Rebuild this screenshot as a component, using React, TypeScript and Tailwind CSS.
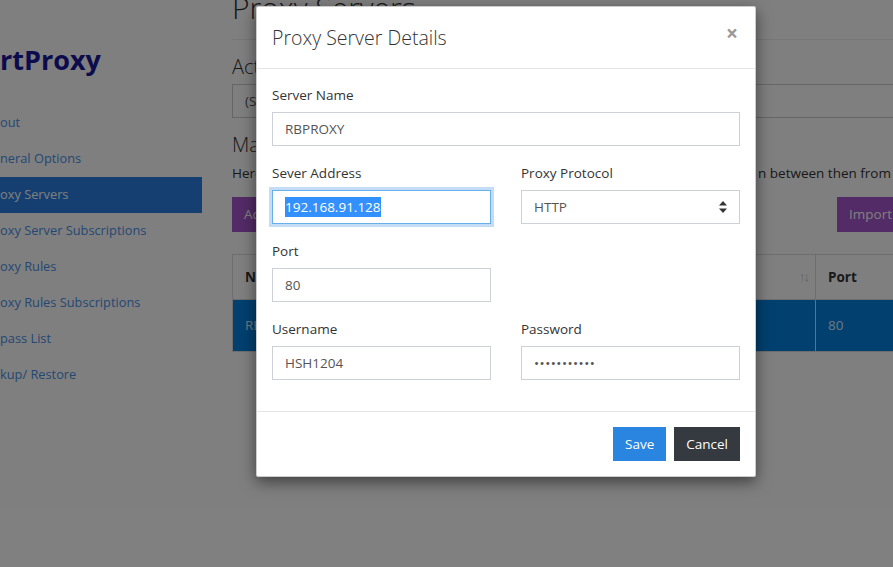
const sideLinks = [
  { label: 'out' },
  { label: 'neral Options' },
  { label: 'oxy Servers', active: true },
  { label: 'oxy Server Subscriptions' },
  { label: 'oxy Rules' },
  { label: 'oxy Rules Subscriptions' },
  { label: 'pass List' },
  { label: 'kup/ Restore' },
];

const Sidebar = () => (
  <aside className="w-[202px] shrink-0">
    <div className="mt-[40px] flex h-[40px] items-center text-[27px] font-bold text-[#16169c]">rtProxy</div>
    <nav className="mt-[25px] flex flex-col">
      {sideLinks.map((l) => (
        <a
          key={l.label}
          href="#"
          className={
            l.active
              ? 'flex h-[36px] items-center bg-[#2a7fe0] text-[12.8px] text-white'
              : 'flex h-[36px] items-center text-[12.8px] text-[#4a90e6]'
          }
        >
          {l.label}
        </a>
      ))}
    </nav>
  </aside>
);

const PageBehind = () => (
  <main className="ml-[30px] w-[753px] shrink-0 text-[#333]">
    <h1 className="-mt-[12px] border-b border-[#eee] pb-[11px] text-[30px] font-light leading-[40px]">Proxy Servers</h1>
    <h4 className="mt-[15px] text-[20px] font-light leading-[24px]">Active Proxy Server</h4>
    <div className="mt-[5px] flex h-[34px] items-center border border-[#ccc] px-[12px] text-[13.5px] text-[#555]">
      (Select a proxy server)
    </div>
    <h4 className="mt-[15px] text-[20px] font-light leading-[24px]">Manage Proxy Servers</h4>
    <p className="mt-[6px] whitespace-nowrap text-[13.5px] leading-[20px]">
      <span className="inline-block w-[526px] overflow-hidden align-bottom">Here are your proxy servers, you can make a selectio</span>
      n between then from toolbar.
    </p>
    <div className="mt-[14px] flex">
      <button className="h-[35px] bg-[#a656cc] px-[12px] text-[13.5px] text-white">Add Proxy Server</button>
      <div className="ml-auto flex gap-[4px]">
        <button className="h-[35px] w-[72px] bg-[#a656cc] pl-[12px] text-left text-[13.5px] text-white">Import</button>
        <button className="h-[35px] w-[72px] bg-[#a656cc] pl-[12px] text-left text-[13.5px] text-white">Export</button>
      </div>
    </div>
    <table className="mt-[22px] w-full border-collapse border border-[#ddd] text-[13.5px]">
      <thead>
        <tr className="h-[45px]">
          <th className="w-[583px] border border-[#ddd] pl-[12px] pr-[7px] text-left font-bold">
            <div className="flex items-center justify-between">
              <span>Name</span>
              <span className="text-[13px] font-normal tracking-[-2px] text-[#c4c4c4]">↑↓</span>
            </div>
          </th>
          <th className="border border-[#ddd] px-[12px] text-left font-bold">Port</th>
        </tr>
      </thead>
      <tbody>
        <tr className="h-[52px] bg-[#0480e0] text-[#dff0ff]">
          <td className="border border-[#ddd] px-[12px]">RBPROXY</td>
          <td className="border border-[#ddd] px-[12px]">80</td>
        </tr>
      </tbody>
    </table>
  </main>
);

const Field = ({ label, children }: { label: string; children: React.ReactNode }) => (
  <div className="mb-[16px]">
    <label className="mb-[6px] block text-[13.5px] leading-[22px] text-[#333]">{label}</label>
    {children}
  </div>
);

const inputCls = 'flex h-[34px] w-full items-center border border-[#ccd1d9] px-[12px] text-[13.5px] text-[#555]';

const Modal = () => (
  <div className="absolute left-[256px] top-[6px] w-[500px] rounded-[2px] border border-black/20 bg-white shadow-[0_5px_15px_rgba(0,0,0,0.5)]">
    <div className="flex h-[62px] items-center justify-between border-b border-[#e5e5e5] px-[15px]">
      <h4 className="text-[19.5px] font-light text-[#333]">Proxy Server Details</h4>
      <button className="-mt-[9px] mr-[2px] text-[21px] font-bold leading-none text-[#999]">×</button>
    </div>
    <div className="p-[15px]">
      <Field label="Server Name">
        <div className={inputCls}>RBPROXY</div>
      </Field>
      <div className="grid grid-cols-2 gap-x-[30px]">
        <Field label="Sever Address">
          <div className="flex h-[34px] w-full items-center border border-[#66afe9] px-[12px] text-[13.5px] shadow-[0_0_0_3px_#c4dcf5]">
            <span className="bg-[#3390ff] text-white">192.168.91.128</span>
          </div>
        </Field>
        <Field label="Proxy Protocol">
          <div className={`${inputCls} justify-between pr-[12px]`}>
            <span>HTTP</span>
            <svg width="8" height="12" viewBox="0 0 8 12" className="fill-[#333]">
              <path d="M4 0 L8 4.5 H0 Z" />
              <path d="M4 12 L8 7.5 H0 Z" />
            </svg>
          </div>
        </Field>
        <Field label="Port">
          <div className={inputCls}>80</div>
        </Field>
        <div />
        <Field label="Username">
          <div className={inputCls}>HSH1204</div>
        </Field>
        <Field label="Password">
          <div className={`${inputCls} tracking-[0.5px]`}>•••••••••••</div>
        </Field>
      </div>
    </div>
    <div className="flex justify-end gap-[8px] border-t border-[#e5e5e5] p-[15px]">
      <button className="h-[34px] bg-[#2a85e0] px-[12px] text-[13.5px] text-white">Save</button>
      <button className="h-[34px] bg-[#343a40] px-[12px] text-[13.5px] text-white">Cancel</button>
    </div>
  </div>
);

export default function App() {
  return (
    <div className="relative h-[567px] w-[893px] overflow-hidden bg-white font-['Open_Sans',sans-serif]">
      <div className="flex">
        <Sidebar />
        <PageBehind />
      </div>
      <div className="absolute inset-0 bg-black/50" />
      <Modal />
    </div>
  );
}
